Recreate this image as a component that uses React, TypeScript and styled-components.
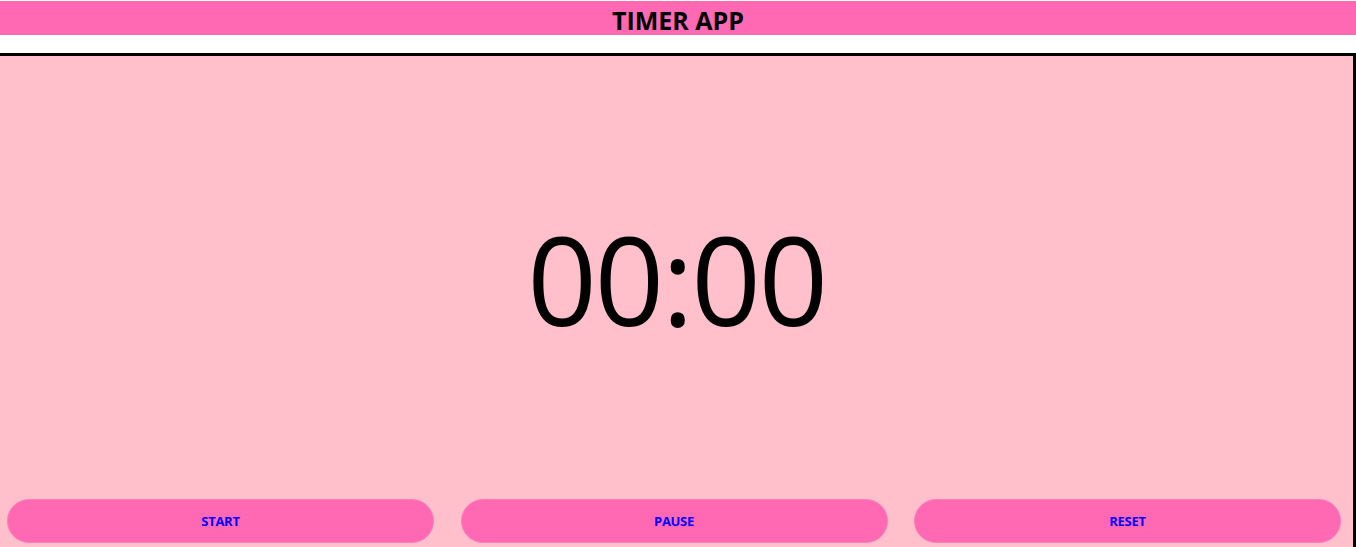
import styled, { createGlobalStyle } from "styled-components";

const Global = createGlobalStyle`
  html, body {
    margin: 0;
    padding: 0;
    background: #ffffff;
    overflow: hidden;
  }
  body {
    font-family: "Open Sans", "Noto Sans", sans-serif;
  }
`;

const Page = styled.div`
  padding-top: 1px;
`;

const Header = styled.h1`
  margin: 0;
  height: 34px;
  line-height: 38px;
  background: #ff69b4;
  color: #000000;
  text-align: center;
  font-size: 25px;
  font-weight: 700;
`;

const Box = styled.div`
  box-sizing: border-box;
  margin: 18px 0 0 -3px;
  width: calc(100% + 3px);
  height: 520px;
  border: 3px solid #000000;
  background: #ffc0cb;
  display: flex;
  flex-direction: column;
`;

const Display = styled.div`
  height: 443px;
  display: flex;
  align-items: center;
  justify-content: center;
  font-size: 122px;
  font-weight: 400;
  letter-spacing: -2.5px;
  color: #000000;
  padding-top: 2px;
  box-sizing: border-box;
`;

const Controls = styled.div`
  display: flex;
  gap: 26.5px;
  padding: 0 12px 0 7px;
`;

const Button = styled.button`
  flex: 1;
  height: 44px;
  border: 1px solid #ff7cbd;
  border-radius: 22px;
  background: #ff69b4;
  color: #0000ff;
  font-family: "Open Sans", "Noto Sans", sans-serif;
  font-size: 13px;
  font-weight: 700;
  letter-spacing: -0.3px;
  cursor: pointer;
`;

export default function App() {
  return (
    <Page>
      <Global />
      <Header>TIMER APP</Header>
      <Box>
        <Display>00:00</Display>
        <Controls>
          <Button>START</Button>
          <Button>PAUSE</Button>
          <Button>RESET</Button>
        </Controls>
      </Box>
    </Page>
  );
}
